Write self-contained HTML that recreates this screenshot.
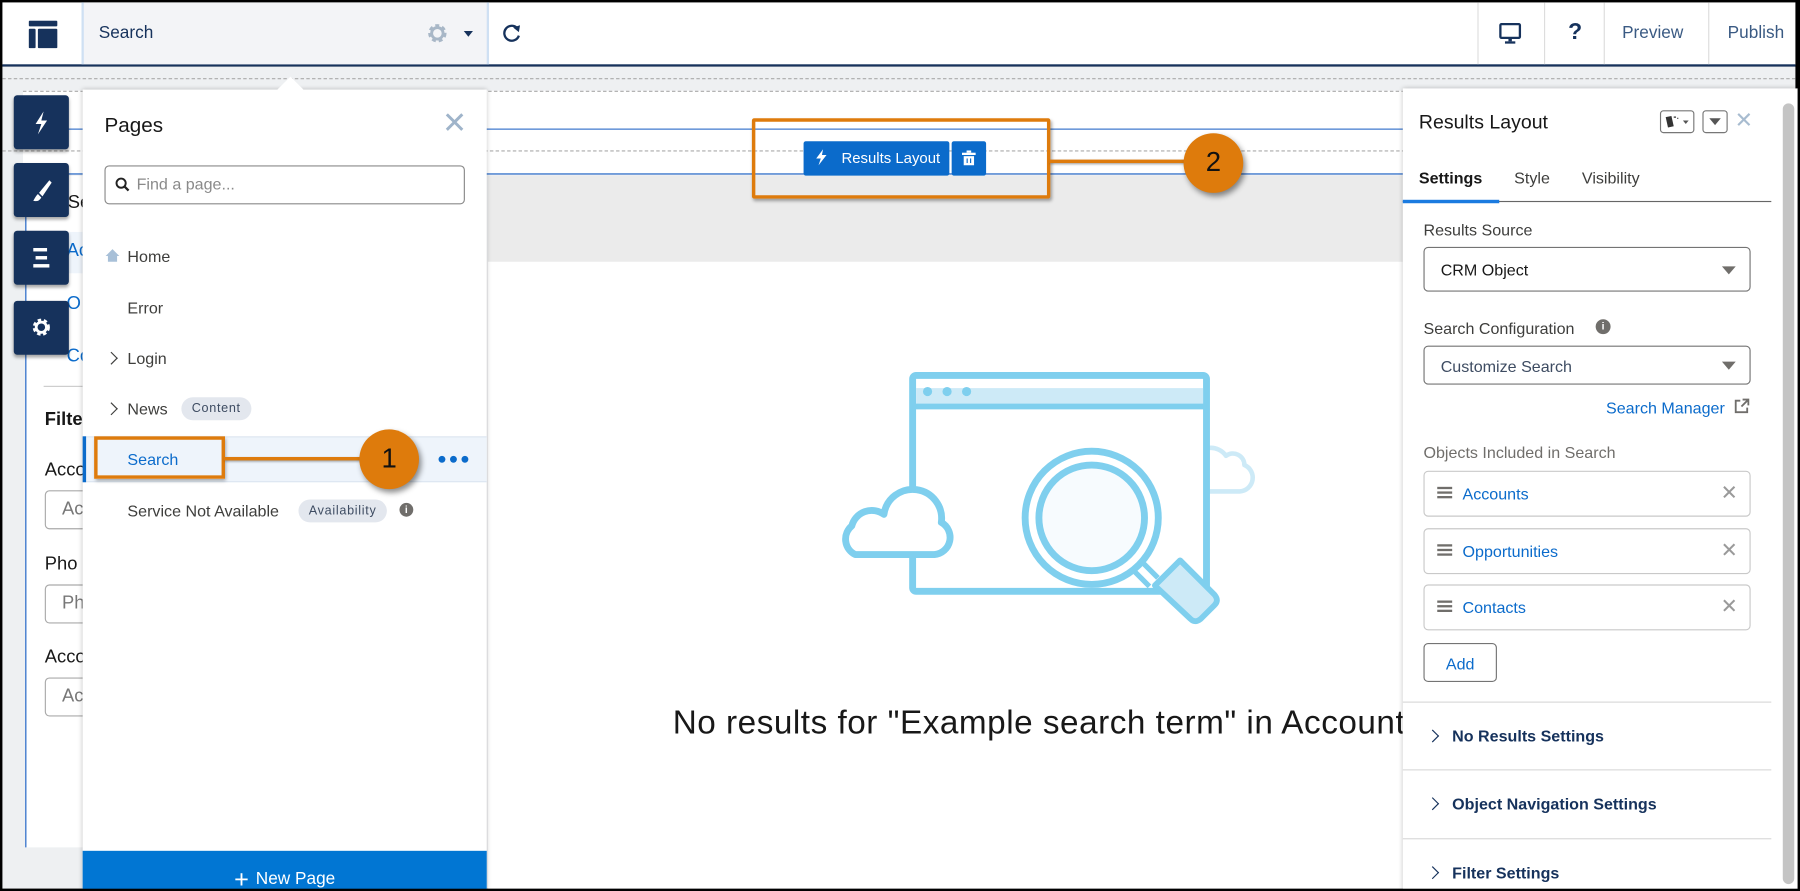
<!DOCTYPE html>
<html><head><meta charset="utf-8">
<style>
*{box-sizing:border-box;margin:0;padding:0}
html,body{width:1800px;height:891px;overflow:hidden;background:#000}
#s{position:absolute;left:0;top:0;width:1568px;height:776px;transform:scale(1.14796,1.1482);transform-origin:0 0;background:#000;font-family:"Liberation Sans",sans-serif;color:#181818;overflow:hidden}
.a{position:absolute}
.navy{color:#16325c}
.fb{position:absolute;left:12px;width:48px;height:47px;background:#16325c;border-radius:3px;box-shadow:0 2px 3px rgba(0,0,0,.35)}
.pi{position:absolute;left:111px;font-size:14px;color:#3e3e3c}
.chev{position:absolute;left:93px;width:8px;height:8px;border-right:1.6px solid #3e3e3c;border-top:1.6px solid #3e3e3c;transform:rotate(45deg)}
.badge{position:absolute;background:#e3e7ee;border-radius:10px;font-size:11px;color:#3e4c62;padding:0 9px;height:20px;line-height:20px;letter-spacing:.6px}
.lbl{position:absolute;left:1240px;font-size:14px;color:#3e3e3c}
.sel{position:absolute;left:1240px;width:285px;border:1px solid #747474;border-radius:4px;font-size:14px;padding-left:14px;color:#181818}
.sel:after{content:"";position:absolute;right:12px;top:50%;margin-top:-3px;border-left:6px solid transparent;border-right:6px solid transparent;border-top:7px solid #706e6b}
.obj{position:absolute;left:1240px;width:285px;height:40px;border:1px solid #c9c9c9;border-radius:4px}
.obj .h{position:absolute;left:11px;top:13px;width:13px;height:2px;background:#706e6b;box-shadow:0 4px 0 #706e6b,0 8px 0 #706e6b}
.obj span{position:absolute;left:33px;top:11px;font-size:14px;color:#0b6bcb}
.obj b{position:absolute;right:10px;top:8px;font-weight:normal;font-size:18px;color:#9a9a9a}
.sec{position:absolute;left:1222px;width:321px;border-top:1px solid #d8d8d8}
.sec .c{position:absolute;left:22px;width:8px;height:8px;border-right:1.8px solid #16325c;border-top:1.8px solid #16325c;transform:rotate(45deg)}
.sec span{position:absolute;left:43px;font-size:14px;font-weight:bold;color:#16325c}
.circ{position:absolute;width:52px;height:52px;border-radius:50%;background:#de7b0c;box-shadow:2px 3px 5px rgba(0,0,0,.45);font-size:24px;text-align:center;line-height:52px;color:#111}
</style></head><body><div id="s">
<!-- header -->
<div class="a" style="left:2px;top:2px;width:1562px;height:55px;background:#fff"></div>
<div class="a" style="left:2px;top:56px;width:1562px;height:2px;background:#16325c"></div>
<svg class="a" style="left:25px;top:18px" width="25" height="24"><rect x="0" y="0" width="25" height="5" rx="1" fill="#16325c"/><rect x="0" y="7" width="6" height="17" rx="1" fill="#16325c"/><rect x="8" y="7" width="17" height="17" rx="1" fill="#16325c"/></svg>
<div class="a" style="left:71px;top:2px;width:355px;height:54px;background:#f3f4f7;border-left:2px solid #cfe0f3;border-right:2px solid #cfe0f3"></div>
<div class="a navy" style="left:86px;top:20px;font-size:15px">Search</div>
<svg class="a" style="left:371px;top:19px" width="20" height="20" viewBox="0 0 20 20"><circle cx="10" cy="10" r="6" fill="none" stroke="#a8b7c7" stroke-width="4" stroke-dasharray="3 2.3"/><circle cx="10" cy="10" r="5" fill="none" stroke="#a8b7c7" stroke-width="2.5"/></svg>
<div class="a" style="left:404px;top:27px;border-left:4.5px solid transparent;border-right:4.5px solid transparent;border-top:5px solid #16325c"></div>
<svg class="a" style="left:437px;top:20px" width="18" height="18" viewBox="0 0 18 18"><path d="M14 5A6.5 6.5 0 1 0 15 11" fill="none" stroke="#16325c" stroke-width="2"/><path d="M10 4L16 2L15 8Z" fill="#16325c"/></svg>
<div class="a" style="left:1287px;top:2px;width:1px;height:54px;background:#ddd"></div>
<div class="a" style="left:1345px;top:2px;width:1px;height:54px;background:#ddd"></div>
<div class="a" style="left:1397px;top:2px;width:1px;height:54px;background:#ddd"></div>
<div class="a" style="left:1488px;top:2px;width:1px;height:54px;background:#ddd"></div>
<svg class="a" style="left:1305px;top:20px" width="22" height="20"><rect x="2" y="1" width="17" height="12" rx="1" fill="none" stroke="#16325c" stroke-width="2"/><rect x="9" y="13" width="3" height="3" fill="#16325c"/><rect x="6" y="16" width="9" height="2" fill="#16325c"/></svg>
<div class="a navy" style="left:1366px;top:17px;font-size:20px;font-weight:bold">?</div>
<div class="a" style="left:1413px;top:20px;font-size:15px;color:#3a5a83">Preview</div>
<div class="a" style="left:1505px;top:20px;font-size:15px;color:#3a5a83">Publish</div>
<!-- canvas -->
<div class="a" style="left:2px;top:58px;width:1562px;height:716px;background:#eef0f2"></div>
<div class="a" style="left:2px;top:68px;width:1562px;border-top:1px dashed #aaa"></div>
<div class="a" style="left:20px;top:79px;width:1544px;height:34px;background:#fff;border-top:1px dashed #aaa;border-bottom:1px solid #1a5fc4"></div>
<div class="a" style="left:20px;top:113px;width:1544px;height:39px;background:#fff;border-bottom:1.5px solid #1a5fc4"></div>
<div class="a" style="left:2px;top:131px;width:1562px;border-top:1px dashed #aaa"></div>
<div class="a" style="left:425px;top:153px;width:797px;height:75px;background:#ebebeb"></div>
<div class="a" style="left:425px;top:228px;width:797px;height:546px;background:#fff"></div>
<!-- left column -->
<div class="a" style="left:22px;top:153px;width:50px;height:585px;background:#fff;border-left:1.5px solid #1a5fc4"></div>
<div class="a" style="left:59px;top:168px;font-size:16px">Sea</div>
<div class="a" style="left:24px;top:202px;width:48px;height:36px;background:#eef4fb"></div>
<div class="a" style="left:58px;top:210px;font-size:16px;color:#0b6bcb">Ac</div>
<div class="a" style="left:58px;top:256px;font-size:16px;color:#0b6bcb">O</div>
<div class="a" style="left:58px;top:302px;font-size:16px;color:#0b6bcb">Co</div>
<div class="a" style="left:38px;top:336px;width:34px;border-top:1px solid #ccc"></div>
<div class="a" style="left:39px;top:357px;font-size:16px;font-weight:bold">Filte</div>
<div class="a" style="left:39px;top:401px;font-size:16px">Acco</div>
<div class="a" style="left:39px;top:427px;width:40px;height:34px;border:1px solid #aaa;border-radius:4px;padding:7px 0 0 14px;font-size:16px;color:#777">Ac</div>
<div class="a" style="left:39px;top:483px;font-size:16px">Pho</div>
<div class="a" style="left:39px;top:509px;width:40px;height:34px;border:1px solid #aaa;border-radius:4px;padding:7px 0 0 14px;font-size:16px;color:#777">Ph</div>
<div class="a" style="left:39px;top:564px;font-size:16px">Acco</div>
<div class="a" style="left:39px;top:590px;width:40px;height:34px;border:1px solid #aaa;border-radius:4px;padding:7px 0 0 14px;font-size:16px;color:#777">Ac</div>
<div class="a" style="left:21px;top:89px;font-size:16px">an</div>
<!-- floating buttons -->
<div class="fb" style="top:83px"><svg width="48" height="47"><path d="M26 14L19 25H24L21 34L29 22H24Z" fill="#fff"/></svg></div>
<div class="fb" style="top:142px"><svg width="48" height="47"><path d="M31 15L22 26L25 29L33 17Z" fill="#fff"/><path d="M21 27L24 30Q22 34 17 33Q19 29 21 27Z" fill="#fff"/></svg></div>
<div class="fb" style="top:201px"><svg width="48" height="47"><rect x="17" y="15" width="12" height="3" fill="#fff"/><rect x="19" y="22" width="10" height="3" fill="#fff"/><rect x="17" y="29" width="14" height="3" fill="#fff"/></svg></div>
<div class="fb" style="top:262px"><svg width="48" height="47"><circle cx="24" cy="23" r="5.5" fill="none" stroke="#fff" stroke-width="4" stroke-dasharray="2.6 2"/><circle cx="24" cy="23" r="4.5" fill="none" stroke="#fff" stroke-width="2.4"/></svg></div>
<!-- pages panel -->
<div class="a" style="left:72px;top:78px;width:352px;height:698px;background:#fff;box-shadow:0 0 4px rgba(0,0,0,.25)"></div>
<div class="a" style="left:245px;top:70px;width:16px;height:16px;background:#fff;transform:rotate(45deg)"></div>
<div class="a" style="left:91px;top:99px;font-size:18px">Pages</div>
<div class="a" style="left:385px;top:92px;font-size:26px;color:#9fb4ca;font-weight:300">✕</div>
<div class="a" style="left:91px;top:144px;width:314px;height:34px;border:1px solid #8a8a8a;border-radius:4px"></div>
<svg class="a" style="left:100px;top:154px" width="14" height="14"><circle cx="5.5" cy="5.5" r="4" fill="none" stroke="#222" stroke-width="1.7"/><path d="M8.5 8.5L12 12" stroke="#222" stroke-width="2"/></svg>
<div class="a" style="left:119px;top:152px;font-size:14px;color:#8a8a8a">Find a page...</div>
<svg class="a" style="left:91px;top:216px" width="14" height="13"><path d="M7 1L1 7H3V12H11V7H13Z" fill="#a8c0d8"/></svg>
<div class="pi" style="top:215px">Home</div>
<div class="pi" style="top:260px">Error</div>
<div class="chev" style="top:308px"></div><div class="pi" style="top:304px">Login</div>
<div class="chev" style="top:352px"></div><div class="pi" style="top:348px">News</div>
<div class="badge" style="left:158px;top:346px">Content</div>
<div class="a" style="left:72px;top:380px;width:352px;height:40px;background:#eef4fb;border-top:1px solid #dde6f0;border-bottom:1px solid #dde6f0"></div>
<div class="a" style="left:72px;top:380px;width:3px;height:40px;background:#0b6bcb"></div>
<div class="pi" style="top:392px;color:#0b6bcb">Search</div>
<div class="a" style="left:382px;top:397px;font-size:0"><span style="display:inline-block;width:6px;height:6px;border-radius:50%;background:#0b6bcb;margin-right:4px"></span><span style="display:inline-block;width:6px;height:6px;border-radius:50%;background:#0b6bcb;margin-right:4px"></span><span style="display:inline-block;width:6px;height:6px;border-radius:50%;background:#0b6bcb"></span></div>
<div class="pi" style="top:437px">Service Not Available</div>
<div class="badge" style="left:260px;top:435px">Availability</div>
<div class="a" style="left:348px;top:438px;width:12px;height:12px;border-radius:50%;background:#706e6b;color:#fff;font-size:9px;text-align:center;line-height:12px;font-weight:bold">i</div>
<div class="a" style="left:72px;top:741px;width:352px;height:35px;background:#0176d3;color:#fff;font-size:15px;text-align:center;padding-top:12px"><span style="font-size:22px;vertical-align:-3px;margin-right:6px">+</span>New Page</div>
<!-- annotation 1 -->
<div class="a" style="left:82px;top:380px;width:114px;height:37px;border:3px solid #de7b0c;box-shadow:1px 2px 3px rgba(0,0,0,.35)"></div>
<div class="a" style="left:195px;top:398px;width:125px;height:3px;background:#de7b0c;box-shadow:1px 1px 2px rgba(0,0,0,.35)"></div>
<div class="circ" style="left:313px;top:374px">1</div>
<!-- results layout button -->
<div class="a" style="left:700px;top:123px;width:127px;height:30px;background:#0b6bcb;border-radius:2px;color:#fff;font-size:13px;padding:7px 0 0 33px">Results Layout</div>
<svg class="a" style="left:710px;top:130px" width="12" height="14"><path d="M7 0L1 8H5L3 14L10 5H6Z" fill="#fff"/></svg>
<div class="a" style="left:829px;top:123px;width:30px;height:30px;background:#0b6bcb;border-radius:2px"></div>
<svg class="a" style="left:838px;top:131px" width="12" height="13"><rect x="0" y="2" width="12" height="2" fill="#fff"/><rect x="4" y="0" width="4" height="2" fill="#fff"/><rect x="1.5" y="5" width="9" height="8" fill="#fff"/><rect x="4" y="7" width="1" height="4" fill="#0b6bcb"/><rect x="7" y="7" width="1" height="4" fill="#0b6bcb"/></svg>
<!-- annotation 2 -->
<div class="a" style="left:655px;top:103px;width:260px;height:70px;border:3px solid #de7b0c;border-radius:2px;box-shadow:1px 2px 3px rgba(0,0,0,.35)"></div>
<div class="a" style="left:914px;top:139px;width:120px;height:3px;background:#de7b0c;box-shadow:1px 1px 2px rgba(0,0,0,.35)"></div>
<div class="circ" style="left:1031px;top:116px">2</div>
<!-- illustration -->
<svg class="a" style="left:720px;top:315px" width="400" height="250" viewBox="720 315 400 250">
<path d="M1050 428H1080A12 12 0 0 0 1084 405A10 10 0 0 0 1068 397A16 16 0 0 0 1040 400" fill="none" stroke="#cdeaf7" stroke-width="4" stroke-linejoin="round"/>
<rect x="795" y="327" width="256" height="188" rx="3" fill="#fff" stroke="#7fcfee" stroke-width="6"/>
<rect x="798" y="338" width="250" height="14" fill="#cdeaf7"/>
<line x1="795" y1="354" x2="1051" y2="354" stroke="#7fcfee" stroke-width="5"/>
<circle cx="808" cy="341" r="4" fill="#7fcfee"/><circle cx="825" cy="341" r="4" fill="#7fcfee"/><circle cx="842" cy="341" r="4" fill="#7fcfee"/>
<path d="M765 483H834A15 15 0 0 0 840 455A24 24 0 0 0 790 448A18 18 0 0 0 762 458A15 15 0 0 0 765 483Z" transform="translate(-20,0)" fill="#fff" stroke="#7fcfee" stroke-width="6" stroke-linejoin="round"/>
<path d="M990 492L1005 507" stroke="#7fcfee" stroke-width="15"/>
<path d="M990 492L1005 507" stroke="#fff" stroke-width="6"/>
<path d="M1006 510L1028 488L1058 518Q1062 523 1058 527L1046 539Q1041 543 1037 539Z" fill="#cdeaf7" stroke="#7fcfee" stroke-width="5" stroke-linejoin="round"/>
<circle cx="951" cy="451" r="58" fill="#fff" stroke="#7fcfee" stroke-width="6"/>
<circle cx="951" cy="451" r="46" fill="#f7fbfe" stroke="#7fcfee" stroke-width="6"/>
</svg>
<div class="a" style="left:586px;top:614px;width:636px;overflow:hidden;white-space:nowrap;font-size:29px;letter-spacing:0.45px;color:#181818;font-weight:300">No results for "Example search term" in Accounts</div>
<!-- right panel -->
<div class="a" style="left:1222px;top:77px;width:344px;height:699px;background:#fff;box-shadow:0 0 4px rgba(0,0,0,.25)"></div>
<div class="a" style="left:1553px;top:90px;width:10px;height:680px;background:#c4c4c4;border-radius:5px"></div>
<div class="a" style="left:1236px;top:97px;font-size:17px">Results Layout</div>
<div class="a" style="left:1446px;top:96px;width:30px;height:20px;border:1px solid #777;border-radius:3px"></div>
<svg class="a" style="left:1450px;top:100px" width="24" height="12"><path d="M1 2L6 1L8 10L3 11Z" fill="#333"/><path d="M8 2L10 2M11 3L12 3" stroke="#333"/><path d="M16 5L21 5L18.5 8Z" fill="#555"/></svg>
<div class="a" style="left:1483px;top:96px;width:22px;height:20px;border:1px solid #777;border-radius:3px"></div>
<div class="a" style="left:1489px;top:103px;border-left:5px solid transparent;border-right:5px solid transparent;border-top:6px solid #555"></div>
<div class="a" style="left:1511px;top:94px;font-size:19px;color:#a8bcd0">✕</div>
<div class="a" style="left:1236px;top:147px;font-size:14px;font-weight:bold">Settings</div>
<div class="a" style="left:1319px;top:147px;font-size:14px;color:#3e3e3c">Style</div>
<div class="a" style="left:1378px;top:147px;font-size:14px;color:#3e3e3c">Visibility</div>
<div class="a" style="left:1222px;top:175px;width:321px;height:1px;background:#666"></div>
<div class="a" style="left:1222px;top:174px;width:84px;height:3px;background:#1b7be0"></div>
<div class="lbl" style="top:192px">Results Source</div>
<div class="sel" style="top:215px;height:39px;padding-top:11px">CRM Object</div>
<div class="lbl" style="top:278px">Search Configuration</div>
<div class="a" style="left:1390px;top:278px;width:13px;height:13px;border-radius:50%;background:#706e6b;color:#fff;font-size:9px;text-align:center;line-height:13px;font-weight:bold">i</div>
<div class="sel" style="top:301px;height:34px;padding-top:9px;color:#3e4c62">Customize Search</div>
<div class="a" style="left:1399px;top:347px;font-size:14px;color:#0b6bcb">Search Manager</div>
<svg class="a" style="left:1510px;top:346px" width="15" height="15"><path d="M6 3H2V13H12V9" fill="none" stroke="#706e6b" stroke-width="1.6"/><path d="M8 2H13V7M13 2L7 8" fill="none" stroke="#706e6b" stroke-width="1.6"/></svg>
<div class="lbl" style="top:386px;color:#706e6b">Objects Included in Search</div>
<div class="obj" style="top:410px"><div class="h"></div><span>Accounts</span><b>✕</b></div>
<div class="obj" style="top:460px"><div class="h"></div><span>Opportunities</span><b>✕</b></div>
<div class="obj" style="top:509px"><div class="h"></div><span>Contacts</span><b>✕</b></div>
<div class="a" style="left:1240px;top:560px;width:64px;height:34px;border:1px solid #747474;border-radius:4px;font-size:14px;color:#0b6bcb;text-align:center;padding-top:9px">Add</div>
<div class="sec" style="top:611px;height:59px"><div class="c" style="top:25px"></div><span style="top:21px">No Results Settings</span></div>
<div class="sec" style="top:670px;height:60px"><div class="c" style="top:25px"></div><span style="top:21px">Object Navigation Settings</span></div>
<div class="sec" style="top:730px;height:46px"><div class="c" style="top:25px"></div><span style="top:21px">Filter Settings</span></div>
<!-- frame border -->
<div class="a" style="left:0;top:0;width:1568px;height:776px;border:2px solid #000;pointer-events:none"></div>
</div></body></html>
